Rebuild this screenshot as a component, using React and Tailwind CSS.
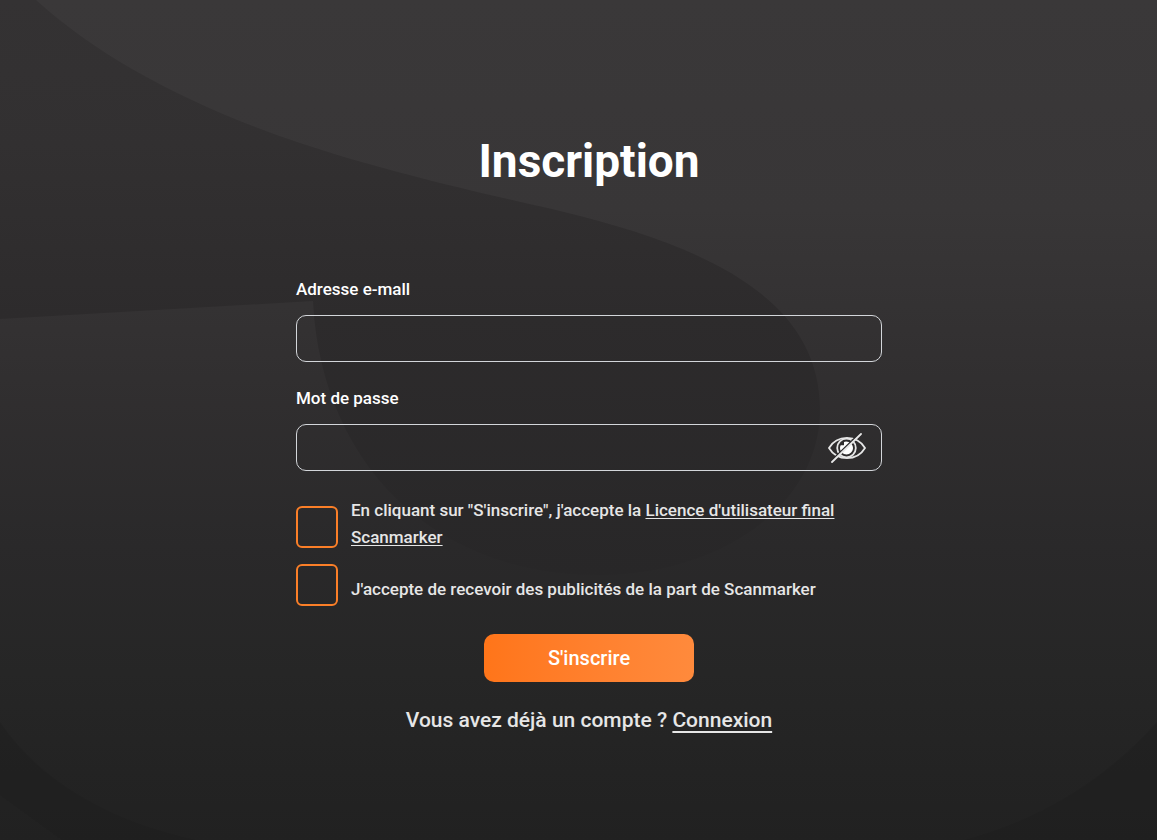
import React, { useState } from 'react';

const Background = () => (
  <svg
    className="absolute inset-0 w-full h-full"
    viewBox="0 0 1157 840"
    preserveAspectRatio="none"
    aria-hidden="true"
  >
    <defs>
      <linearGradient id="shade" x1="0" y1="0" x2="0" y2="1">
        <stop offset="0" stopColor="#3a3839" />
        <stop offset="0.25" stopColor="#383637" />
        <stop offset="0.45" stopColor="#312f30" />
        <stop offset="0.65" stopColor="#2a292a" />
        <stop offset="0.8" stopColor="#262626" />
        <stop offset="1" stopColor="#212121" />
      </linearGradient>
      <linearGradient id="swirl" gradientUnits="userSpaceOnUse" x1="0" y1="0" x2="0" y2="575">
        <stop offset="0" stopColor="#343233" />
        <stop offset="0.25" stopColor="#323031" />
        <stop offset="0.55" stopColor="#2d2b2c" />
        <stop offset="1" stopColor="#282728" />
      </linearGradient>
    </defs>
    <rect width="1157" height="840" fill="url(#shade)" />
    <path
      d="M0 0H36C100 58 190 106 300 143C390 173 490 195 560 211C710 247 820 300 820 410C820 505 720 575 600 575C420 575 320 450 313 301L0 319Z"
      fill="url(#swirl)"
    />
    <path d="M0 722C40 780 105 820 195 840H0Z" fill="#000" fillOpacity="0.06" />
    <path d="M0 795L62 840H0Z" fill="#fff" fillOpacity="0.01" />
    <path d="M1157 722C1105 780 1040 820 965 840H1157Z" fill="#000" fillOpacity="0.06" />
  </svg>
);

const EyeOffIcon = () => (
  <svg width="38" height="30" viewBox="0 0 38 30" fill="none" stroke="#e6e6e6" strokeWidth="1.8">
    <path d="M1 15C9 1.500 29 1.500 37 15C29 28.500 9 28.500 1 15Z" />
    <circle cx="18.500" cy="15" r="9.300" />
    <path
      d="M18 8.500C22 8.500 25 11.500 25 15C25 18.500 22 21.500 18.500 21.500C15 21.500 12 18.500 12 15C12 14 12.300 13 12.700 12.300H16V9Z"
      fill="#fff"
      stroke="none"
    />
    <path d="M32 0L3 28" stroke="#2b2a2b" strokeWidth="1.600" />
    <path d="M33 1L4 29" strokeLinecap="round" />
  </svg>
);

const checkboxClass =
  'appearance-none shrink-0 size-[42px] rounded-md border-2 border-[#fb7f28] checked:bg-[#fb7f28] cursor-pointer';
const inputClass =
  'w-full h-[47px] px-4 rounded-[10px] border border-[#d3d6da] bg-transparent text-white outline-none focus:border-[#fb7f28]';

const App = () => {
  const [form, setForm] = useState({ email: '', password: '' });
  const [showPassword, setShowPassword] = useState(false);

  const handleChange = (e) => {
    setForm({ ...form, [e.target.name]: e.target.value });
  };

  const handleSubmit = (e) => {
    e.preventDefault();
  };

  return (
    <div className="relative min-h-screen pl-[21px] bg-[#2b2a2b] text-white font-['Roboto',sans-serif]">
      <Background />

      <main className="relative mx-auto w-full max-w-[586px] pt-[129px] pb-16">
        <h1 className="text-center text-[46px] leading-16 font-bold">Inscription</h1>

        <form onSubmit={handleSubmit} className="mt-[84px]">
          <label htmlFor="email" className="block text-[17px] leading-6 font-medium">
            Adresse e-mall
          </label>
          <input
            id="email"
            name="email"
            type="email"
            value={form.email}
            onChange={handleChange}
            className={`mt-[14px] ${inputClass}`}
          />

          <label htmlFor="password" className="block mt-6 text-[17px] leading-6 font-medium">
            Mot de passe
          </label>
          <div className="relative mt-[14px]">
            <input
              id="password"
              name="password"
              type={showPassword ? 'text' : 'password'}
              value={form.password}
              onChange={handleChange}
              className={`pr-16 ${inputClass}`}
            />
            <button
              type="button"
              onClick={() => setShowPassword(!showPassword)}
              aria-label="Afficher le mot de passe"
              className="absolute right-4 inset-y-0 flex items-center cursor-pointer"
            >
              <EyeOffIcon />
            </button>
          </div>

          {/* Consent */}
          <div className="mt-[26px] flex items-center gap-[13px] text-[#e6e6e6]">
            <input id="license" type="checkbox" className={checkboxClass} />
            <label htmlFor="license" className="pb-1.5 text-[17px] leading-[27px] font-medium">
              En cliquant sur "S'inscrire", j'accepte la{' '}
              <a href="#license" className="underline underline-offset-2">
                Licence d'utilisateur final Scanmarker
              </a>
            </label>
          </div>
          <div className="mt-[7px] flex items-center gap-[13px] text-[#e6e6e6]">
            <input id="ads" type="checkbox" className={checkboxClass} />
            <label htmlFor="ads" className="pt-2 text-[17px] leading-[27px] font-medium">
              J'accepte de recevoir des publicités de la part de Scanmarker
            </label>
          </div>

          <button
            type="submit"
            className="block mx-auto mt-7 w-[210px] h-12 rounded-[10px] bg-linear-to-r from-[#ff7519] to-[#ff8a3c] text-xl font-medium cursor-pointer"
          >
            S'inscrire
          </button>
        </form>

        <p className="mt-[22px] text-center text-[21px] leading-8 font-medium text-[#e6e6e6]">
          Vous avez déjà un compte ?{' '}
          <a href="#login" className="underline underline-offset-4">
            Connexion
          </a>
        </p>
      </main>
    </div>
  );
};

export default App;
